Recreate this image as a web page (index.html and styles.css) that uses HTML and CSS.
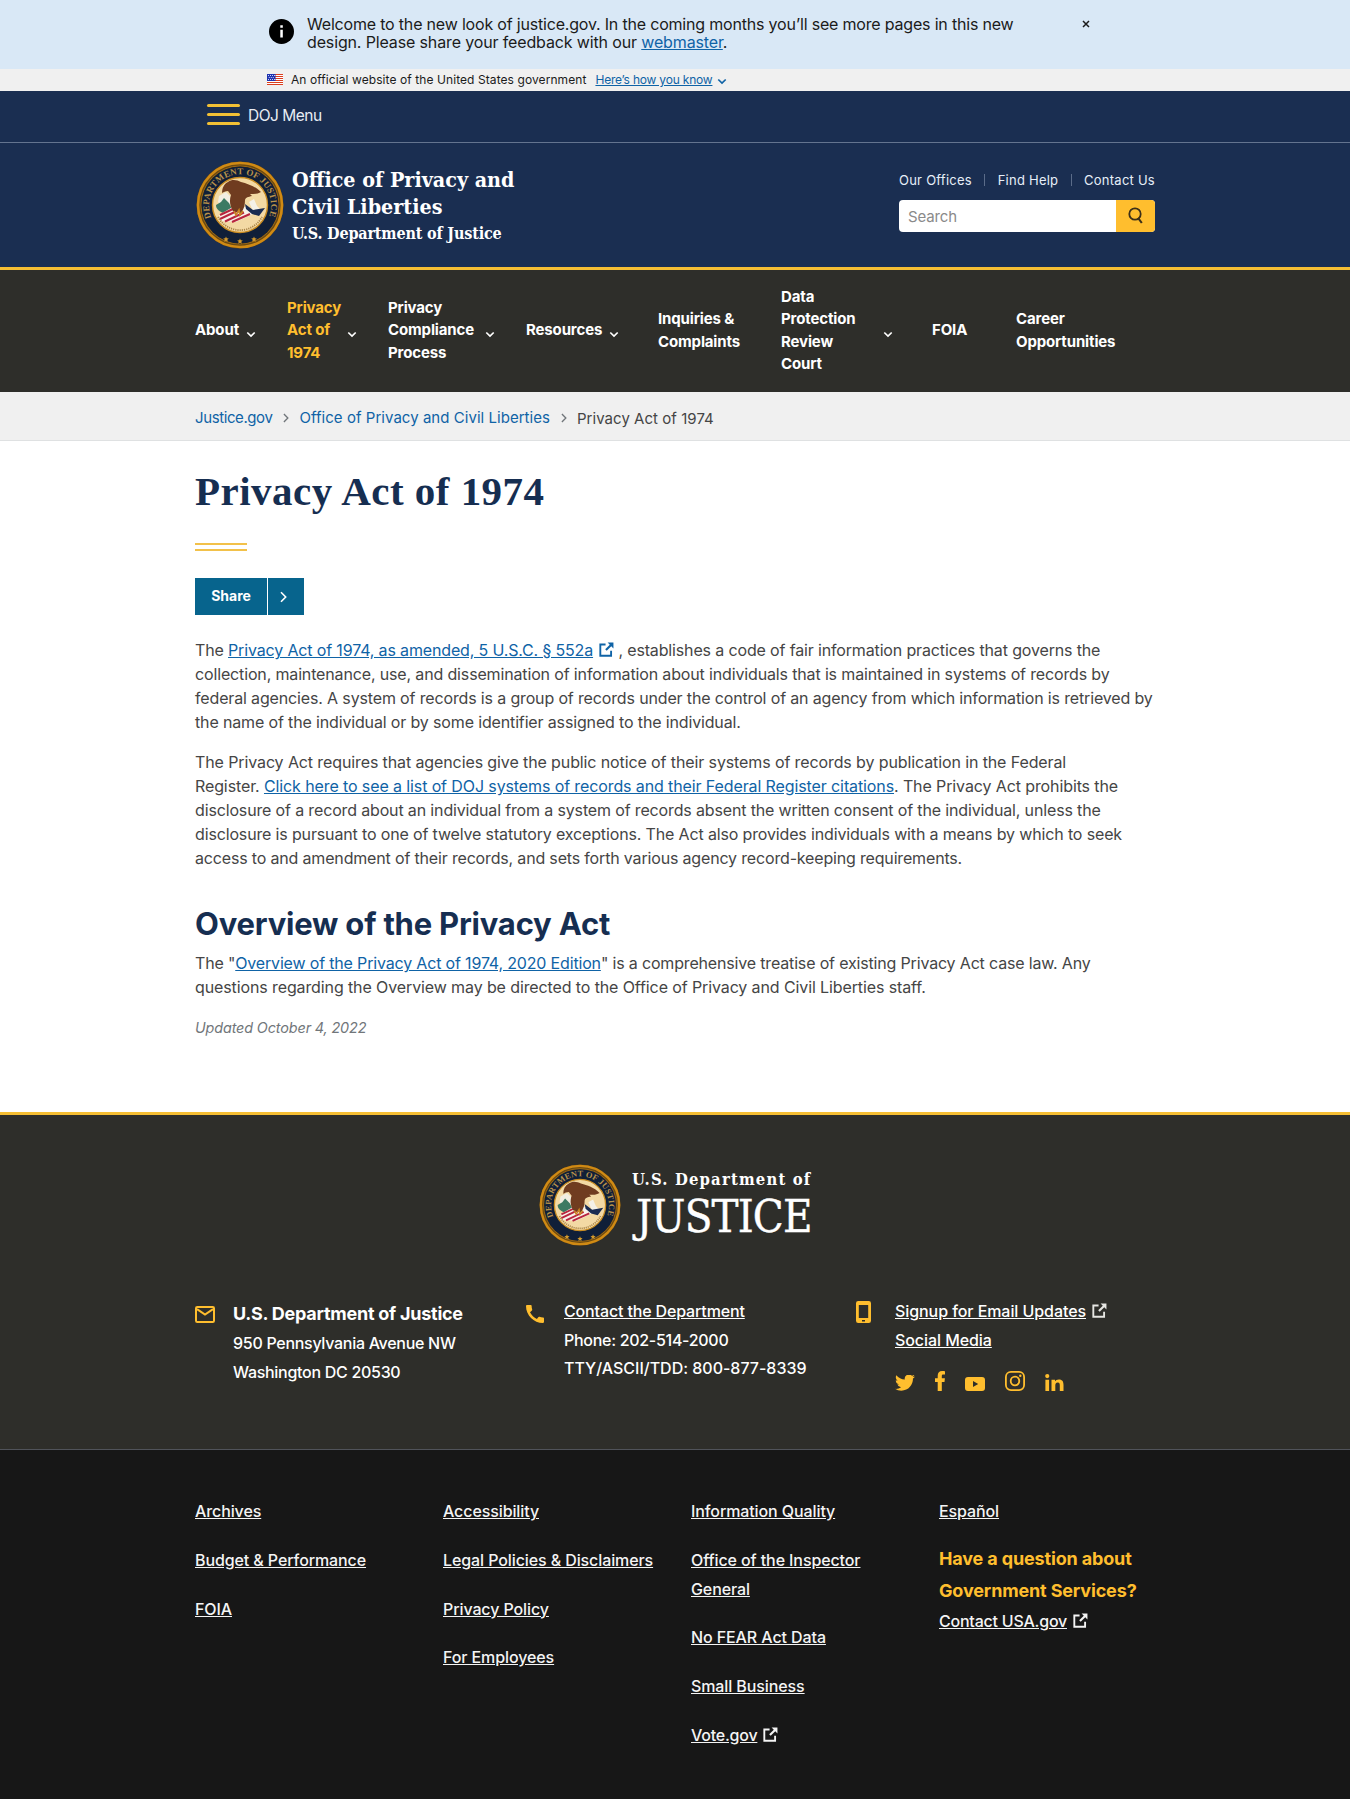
FILE: index.html
```html
<!DOCTYPE html>
<html lang="en">
<head>
<meta charset="utf-8">
<title>Office of Privacy and Civil Liberties | Privacy Act of 1974</title>
<link rel="stylesheet" href="styles.css">
</head>
<body>
<svg class="defs" width="0" height="0" aria-hidden="true">
  <symbol id="ext" viewBox="0 0 16 16"><path d="M7 2.6H1.4v12h11.5V9.4" fill="none" stroke="currentColor" stroke-width="2"/><path d="M9.2 .6H15.4V6.8L13.1 4.5 8.2 9.4 6.6 7.8 11.5 2.9z" fill="currentColor"/></symbol>
  <symbol id="down" viewBox="0 0 10 7"><path d="M1.3 1.5L5 5l3.7-3.5" fill="none" stroke="currentColor" stroke-width="1.7"/></symbol>
  <symbol id="right" viewBox="0 0 7 12"><path d="M1 1.2L5.7 6 1 10.8" fill="none" stroke="currentColor" stroke-width="1.6"/></symbol>
</svg>

<section class="alert">
  <div class="alert-inner">
    <svg class="alert-icon" viewBox="0 0 25 25"><circle cx="12.5" cy="12.5" r="12.5"/><path d="M11.3 6.3h2.5v2.5h-2.5zM11.3 10.7h2.5v7.7h-2.5z" fill="#fff"/></svg>
    <p class="alert-text">Welcome to the new look of justice.gov. In the coming months you’ll see more pages in this new<br><span class="alert-more">design. Please share your feedback with our <a href="#">webmaster</a>.</span></p>
    <button class="close" aria-label="Close"><svg viewBox="0 0 8 8"><path d="M1 1l6 6M7 1L1 7" stroke="#1b1b1b" stroke-width="1.5"/></svg></button>
  </div>
</section>

<section class="banner">
  <div class="banner-inner">
    <svg class="flag" viewBox="0 0 16 11"><path fill="#fff" d="M0 0h16v11H0z"/><path d="M0 .5h16M0 2.5h16M0 4.5h16M0 6.5h16M0 8.5h16M0 10.5h16" stroke="#db3e1f"/><path fill="#1e33b1" d="M0 0h8.5v7H0z"/><path d="M1 1.5h7M1.8 3.5h6M1 5.5h7" stroke="#c8cff5" stroke-dasharray="1 1"/></svg>
    <span class="banner-text">An official website of the United States government</span>
    <a class="banner-link" href="#">Here’s how you know</a>
    <svg class="down banner-down"><use href="#down"/></svg>
  </div>
</section>

<div class="menu-bar">
  <div class="wrap menu-inner"><span class="burger"><i></i><i></i><i></i></span><span class="menu-label">DOJ Menu</span></div>
</div>

<header class="header">
  <div class="wrap header-inner">
    <svg class="header-seal" viewBox="0 0 88 88">
      <g id="seal">
        <circle cx="44" cy="44" r="43.5" fill="#6b4a12"/>
        <circle cx="44" cy="44" r="42" fill="none" stroke="#d08a14" stroke-width="2.6"/>
        <circle cx="44" cy="44" r="39" fill="none" stroke="#a06a14" stroke-width="1"/>
        <circle cx="44" cy="44" r="38.5" fill="#101f38"/>
        <circle cx="44" cy="44" r="27.500" fill="#f3d9a4" stroke="#c98c22" stroke-width="1.4"/>
        <path id="sealArc" d="M15.500 56.500A31 31 0 1 1 72.500 56.500" fill="none"/>
        <text class="seal-text"><textPath href="#sealArc">DEPARTMENT OF JUSTICE</textPath></text>
        <g fill="#d49a2c"><path d="M30 75.500l.8 1.8 2 .1-1.5 1.3.5 2-1.8-1-1.8 1 .5-2-1.5-1.300 2-.1z"/><path d="M44 77.500l.8 1.8 2 .1-1.5 1.3.5 2-1.8-1-1.8 1 .5-2-1.5-1.300 2-.1z"/><path d="M58 75.500l.8 1.8 2 .1-1.5 1.3.5 2-1.8-1-1.8 1 .5-2-1.5-1.300 2-.1z"/></g>
        <path d="M23 35l7-4 4 4 2 8-9 3-5-5z" fill="#f1ede2"/>
        <path d="M20 44l5-3 3-4 5 5 3 6-9 4c-4-2-7-4-7-8z" fill="#3d7a63"/>
        <path d="M53 41l5-3 3 7 6 6-10-1z" fill="#f4f1e8"/>
        <path d="M23 54l17-10 13 3 6 5-19 9-14-1z" fill="#f8f2ea"/>
        <path d="M24 54l13-6M24 58l19-9M29 60.500l19-9M36 61l18-8" stroke="#b8253f" stroke-width="2"/>
        <path d="M49 43l8 6 12-2-6 8-7-2-6-5z" fill="#1a2c52"/>
        <path d="M32 21c4-3 9-2 13 0 7 2 14 4 20 10-3 2-7 2-11 2l2 2c-4 1-6 1-7 4 0 5-1 9-4 13l-8-2c-3-5-4-10-2-16l-3-4c-3 0-4 1-6 2 0-5 2-9 6-11z" fill="#703c20"/>
        <path d="M38 50l2 4 3-5 1 5 3-4" fill="none" stroke="#c88524" stroke-width="1.6"/>
        <path d="M22 56A25 25 0 0 0 66 56" fill="none" stroke="#a98548" stroke-width="1.800" stroke-dasharray="1.200 1"/>
      </g>
    </svg>
    <div class="site-title">Office of Privacy and<br>Civil Liberties<div class="site-sub">U.S. Department of Justice</div></div>
    <div class="header-tools">
      <div class="tool-links"><a>Our Offices</a><i></i><a>Find Help</a><i></i><a>Contact Us</a></div>
      <div class="search"><span class="search-field">Search</span><button class="search-btn" aria-label="Search"><svg viewBox="0 0 16 18"><circle cx="7" cy="7" r="5.7" fill="none" stroke="#3d3018" stroke-width="1.8"/><path d="M10 10.800l3.800 5.200" stroke="#3d3018" stroke-width="2.1"/></svg></button></div>
    </div>
  </div>
</header>

<nav class="nav">
  <div class="wrap nav-inner">
    <a><span class="w-about">About</span><svg class="down"><use href="#down"/></svg></a>
    <a class="active"><span class="w-act">Privacy<br>Act of<br>1974</span><svg class="down"><use href="#down"/></svg></a>
    <a><span class="w-comp">Privacy<br>Compliance<br>Process</span><svg class="down"><use href="#down"/></svg></a>
    <a><span class="w-res">Resources</span><svg class="down"><use href="#down"/></svg></a>
    <a><span>Inquiries &amp;<br>Complaints</span></a>
    <a><span class="w-data">Data<br>Protection<br>Review<br>Court</span><svg class="down"><use href="#down"/></svg></a>
    <a><span>FOIA</span></a>
    <a><span>Career<br>Opportunities</span></a>
  </div>
</nav>

<div class="crumbs">
  <div class="wrap crumbs-inner">
    <a class="crumb-home" href="#">Justice.gov</a><svg class="right"><use href="#right"/></svg><a href="#">Office of Privacy and Civil Liberties</a><svg class="right"><use href="#right"/></svg><span class="crumb-here">Privacy Act of 1974</span>
  </div>
</div>

<main class="wrap main">
  <h1>Privacy Act of 1974</h1>
  <div class="rule"></div>
  <button class="share"><span>Share</span><span class="share-more"><svg class="right"><use href="#right"/></svg></span></button>
  <p class="lead">The <a href="#">Privacy Act of 1974, as amended, 5 U.S.C. § 552a</a><svg class="ext"><use href="#ext"/></svg> , establishes a code of fair information practices that governs the<br>collection, maintenance, use, and dissemination of information about individuals that is maintained in systems of records by<br>federal agencies. A system of records is a group of records under the control of an agency from which information is retrieved by<br>the name of the individual or by some identifier assigned to the individual.</p>
  <p><span class="looser">The Privacy Act requires that agencies give the public notice of their systems of records by publication in the Federal<br>Register. <a href="#">Click here to see a list of DOJ systems of records and their Federal Register citations</a>. The Privacy Act prohibits the</span><br>disclosure of a record about an individual from a system of records absent the written consent of the individual, unless the<br>disclosure is pursuant to one of twelve statutory exceptions. The Act also provides individuals with a means by which to seek<br><span class="tighter">access to and amendment of their records, and sets forth various agency record-keeping requirements.</span></p>
  <h2>Overview of the Privacy Act</h2>
  <p class="overview"><span class="tighter">The "<a href="#">Overview of the Privacy Act of 1974, 2020 Edition</a>" is a comprehensive treatise of existing Privacy Act case law. Any</span><br>questions regarding the Overview may be directed to the Office of Privacy and Civil Liberties staff.</p>
  <p class="updated">Updated October 4, 2022</p>
</main>

<footer>
  <section class="foot">
    <div class="wrap">
      <div class="foot-logo">
        <svg class="foot-seal" viewBox="0 0 88 88"><use href="#seal"/></svg>
        <div class="foot-name"><div class="foot-dept">U.S. Department of</div><div class="foot-justice">JUSTICE</div></div>
      </div>
      <div class="foot-cols">
        <div class="contact">
          <svg class="mail" viewBox="0 0 20 17"><rect x="1" y="1" width="18" height="15" rx="1.2" fill="none" stroke="#ffbe2e" stroke-width="2"/><path d="M2 3.2l8 5.3 8-5.3" fill="none" stroke="#ffbe2e" stroke-width="2"/></svg>
          <div><div class="foot-head">U.S. Department of Justice</div><div class="addr">950 Pennsylvania Avenue NW</div><div class="addr">Washington DC 20530</div></div>
        </div>
        <div class="contact">
          <svg class="phone" viewBox="3 3 18 18"><path fill="#ffbe2e" d="M20.01 15.38c-1.23 0-2.42-.2-3.53-.56a.977.977 0 0 0-1.01.24l-1.57 1.97c-2.83-1.35-5.48-3.9-6.89-6.83l1.95-1.66c.27-.28.35-.67.24-1.02-.37-1.11-.56-2.3-.56-3.53 0-.54-.45-.99-.99-.99H4.190C3.650 3 3 3.240 3 3.990 3 13.280 10.730 21 20.010 21c.71 0 .99-.63.99-1.180v-3.450c0-.54-.45-.99-.99-.99z"/></svg>
          <div><a href="#">Contact the Department</a><div class="addr">Phone: 202-514-2000</div><div class="tty">TTY/ASCII/TDD: 800-877-8339</div></div>
        </div>
        <div class="contact">
          <svg class="mobile" viewBox="0 0 15 22"><path fill="#ffbe2e" fill-rule="evenodd" d="M2.2 0h10.6A2.2 2.2 0 0 1 15 2.2v17.6a2.2 2.2 0 0 1-2.2 2.2H2.2A2.2 2.2 0 0 1 0 19.800V2.200A2.200 2.200 0 0 1 2.200 0zM2.800 4v13h9.400V4zM6 19v1.400h3V19z"/></svg>
          <div class="signup"><a href="#">Signup for Email Updates</a><svg class="ext"><use href="#ext"/></svg><br><a href="#">Social Media</a>
            <div class="social">
              <svg class="tw" viewBox="0 3 24 19"><path d="M23.950 4.570a10 10 0 0 1-2.820.770 4.960 4.960 0 0 0 2.160-2.720c-.950.550-2 .950-3.130 1.180a4.920 4.920 0 0 0-8.380 4.480C7.690 8.090 4.070 6.130 1.640 3.160a4.820 4.820 0 0 0-.670 2.480c0 1.710.870 3.210 2.190 4.100a4.900 4.900 0 0 1-2.230-.620v.060a4.920 4.920 0 0 0 3.950 4.830 5 5 0 0 1-2.210.080 4.940 4.940 0 0 0 4.600 3.420A9.870 9.870 0 0 1 0 19.540a13.990 13.990 0 0 0 7.550 2.210c9.050 0 14-7.500 14-13.980 0-.210 0-.420-.020-.630a9.940 9.940 0 0 0 2.420-2.570z"/></svg>
              <svg class="fb" viewBox="0 0 10 20"><path d="M2.700 20V11H0V7.300h2.700V4.800C2.700 1.700 4.300 0 7.100 0c1.300 0 2.400.1 2.900.2v3.300H8.300C7 3.500 6.800 4.100 6.800 5v2.300h3.100L9.500 11H6.800v9z"/></svg>
              <svg class="yt" viewBox="0 0 20 14"><path fill-rule="evenodd" d="M3 0h14q3 0 3 3v8q0 3-3 3H3q-3 0-3-3V3q0-3 3-3zm5 4v6l5.200-3z"/></svg>
              <svg class="ig" viewBox="0 0 20 20"><g fill="none" stroke="#ffbe2e" stroke-width="1.800"><rect x=".9" y=".9" width="18.200" height="18.200" rx="5"/><circle cx="10" cy="10" r="4.300"/></g><circle cx="15.300" cy="4.700" r="1.200"/></svg>
              <svg class="li" viewBox="0 0 19 17"><path d="M.4 5.700h3.700V17H.4zM6.500 5.700H10v1.600c.6-1.100 1.900-1.900 3.800-1.900 3.900 0 4.700 2.400 4.700 5.700V17h-3.700v-5.300c0-1.500-.1-3.100-2-3.100-2.100 0-2.500 1.500-2.500 3V17H6.500z"/><circle cx="2.250" cy="2.100" r="2.100"/></svg>
            </div>
          </div>
        </div>
      </div>
    </div>
  </section>
  <section class="bottom">
    <div class="wrap bottom-cols">
      <ul><li><a href="#">Archives</a></li><li><a href="#">Budget &amp; Performance</a></li><li><a href="#">FOIA</a></li></ul>
      <ul><li><a href="#">Accessibility</a></li><li><a href="#">Legal Policies &amp; Disclaimers</a></li><li><a href="#">Privacy Policy</a></li><li><a href="#">For Employees</a></li></ul>
      <ul><li><a href="#">Information Quality</a></li><li><a href="#">Office of the Inspector<br>General</a></li><li><a href="#">No FEAR Act Data</a></li><li><a href="#">Small Business</a></li><li class="site-link"><a href="#">Vote.gov</a><svg class="ext"><use href="#ext"/></svg></li></ul>
      <div><a href="#">Español</a><div class="question">Have a question about<br>Government Services?</div><div class="site-link"><a href="#">Contact USA.gov</a><svg class="ext"><use href="#ext"/></svg></div></div>
    </div>
  </section>
</footer>
</body>
</html>
```
FILE: styles.css
```css
* { box-sizing: border-box; }
body { margin: 0; background: #fff; color: #454545; font: 400 16px/24px Inter, "Liberation Sans", sans-serif; letter-spacing: -.148px; white-space: nowrap; }
p, h1, h2, ul { margin: 0; padding: 0; }
button { border: 0; padding: 0; margin: 0; background: none; font: inherit; }
svg { display: block; flex: none; }
a { color: #0f63a6; }
.defs { position: absolute; }
.wrap { width: 960px; margin: 0 auto; }
.down { width: 10px; height: 7px; }
.right { width: 7px; height: 12px; }
.ext { display: inline-block; width: 15px; height: 15px; margin-left: 6px; vertical-align: -1px; }
.seal-text { font: 700 9px "Liberation Serif", serif; fill: #b9924a; letter-spacing: .15px; }

.alert { height: 69px; background: #d9e8f6; color: #1b1b1b; }
.alert-inner { display: flex; width: 826px; margin-left: 269px; padding-top: 15px; }
.alert-icon { width: 25px; height: 25px; margin: 4px 13px 0 0; }
.alert-text { line-height: 18px; letter-spacing: -.190px; }
.alert-more { letter-spacing: -.140px; }
.close { margin: 5px 5px 0 auto; height: 8px; }
.close svg { width: 8px; height: 8px; }

.banner { height: 22px; background: #f0f0f0; color: #1b1b1b; font-size: 12px; line-height: 21px; }
.banner-inner { display: flex; align-items: center; margin-left: 267px; }
.flag { width: 16px; height: 11px; margin-right: 8px; }
.banner-text { letter-spacing: .08px; }
.banner-link { margin-left: 9px; letter-spacing: -.199px; }
.banner-down { margin: 3px 0 0 5px; color: #0f63a6; }

.menu-bar { height: 52px; background: #1a2e51; border-bottom: 1px solid #64748f; color: #e8edf4; }
.menu-inner { display: flex; align-items: center; height: 46px; padding-left: 12px; }
.burger { display: flex; flex-direction: column; gap: 6px; width: 33px; margin-right: 8px; }
.burger i { height: 3px; border-radius: 2px; background: #f2c035; }
.menu-label { padding-top: 3px; font-size: 15.500px; letter-spacing: -.5px; }

.header { height: 127px; background: #1a2e51; border-bottom: 3px solid #f5be33; }
.header-inner { display: flex; align-items: flex-start; }
.header-seal { width: 88px; height: 88px; margin: 18px 8px 0 1px; }
.site-title { margin-top: 23px; color: #fff; font: 700 21.300px/27px "DejaVu Serif Condensed", "DejaVu Serif", serif; font-stretch: condensed; letter-spacing: 0; }
.site-sub { font-size: 16px; letter-spacing: -.170px; }
.header-tools { width: 256px; margin: 29px 0 0 auto; }
.tool-links { display: flex; justify-content: space-between; align-items: center; color: #e6eef8; font-size: 13px; line-height: 16px; letter-spacing: .240px; }
.tool-links a { color: inherit; }
.tool-links i { width: 1px; height: 12px; background: #5b6c89; }
.search { display: flex; height: 32px; margin-top: 12px; border-radius: 4px; overflow: hidden; background: #fff; }
.search-field { flex: 1; padding-left: 9px; color: #8a8a8a; font-size: 15px; line-height: 33px; }
.search-btn { display: grid; place-items: center; width: 39px; background: #ffbe2e; }
.search-btn svg { width: 16px; height: 18px; }

.nav { height: 122px; background: #2e2e2a; color: #fff; }
.nav-inner { display: grid; grid-template-columns: 92px 101px 138px 132px 123px 151px 84px 139px; align-items: center; height: 121px; font-weight: 700; font-size: 15px; line-height: 22.500px; letter-spacing: -.14px; }
.nav a { display: flex; align-items: center; color: inherit; }
.nav .active { color: #ffbe2e; }
.nav .down { margin-top: 7px; color: #fff; }
.w-about { width: 51px; }
.w-act { width: 60px; }
.w-comp { width: 97px; }
.w-res { width: 83px; }
.w-data { width: 102px; }

.crumbs { height: 49px; background: #f0f0f0; border-bottom: 1px solid #dfe1e2; font-size: 15px; letter-spacing: .04px; }
.crumbs-inner { display: flex; align-items: center; height: 48px; padding-top: 3px; }
.crumbs a { text-decoration: none; }
.crumbs svg { width: 6px; height: 10px; margin: 0 10px 0 11px; color: #71767a; }
.crumb-home { letter-spacing: -.4px; }
.crumb-here { padding-top: 2px; }

.main { height: 671px; padding-top: 25px; }
h1 { color: #162e51; font: 700 41px/50px "Liberation Serif", serif; letter-spacing: .480px; }
.rule { width: 52px; height: 8px; margin-top: 27px; border: solid #f2c14a; border-width: 2px 0; }
.share { display: flex; align-items: stretch; width: 109px; height: 37px; margin-top: 27px; background: #07648d; color: #fff; font-weight: 700; font-size: 14px; line-height: 36px; letter-spacing: 0; }
.share > span:first-child { width: 72px; text-align: center; }
.share-more { display: flex; align-items: center; padding-left: 12px; border-left: 1px solid #fff; }
.main p { margin-top: 16px; }
.main .lead { margin-top: 23px; }
.looser { letter-spacing: -.110px; }
.tighter { letter-spacing: -.168px; }
h2 { margin-top: 34px; color: #162e51; font-weight: 700; font-size: 31px; line-height: 40px; letter-spacing: -.21px; }
.main .overview { margin-top: 7px; letter-spacing: -.111px; }
.lead .ext { color: #0f63a6; }
.main .updated { margin-top: 17px; color: #71767a; font-style: italic; font-size: 14.400px; letter-spacing: -.13px; }

.foot { height: 338px; padding-top: 49px; background: #2e2e2a; border-top: 3px solid #f5be33; border-bottom: 1px solid #50535a; color: #fff; font-weight: 500; line-height: 29px; }
.foot a, .bottom a { color: inherit; }
.foot-logo { display: flex; gap: 11px; padding-left: 344px; height: 133px; }
.foot-seal { width: 82px; height: 82px; }
.foot-name { padding-top: 4px; font-family: "DejaVu Serif Condensed", "DejaVu Serif", serif; font-stretch: condensed; }
.foot-dept { font-weight: 700; font-size: 16.500px; line-height: 24px; letter-spacing: 1.170px; }
.foot-justice { padding-left: 4px; font-weight: 400; font-size: 45px; line-height: 49px; letter-spacing: -.850px; -webkit-text-stroke: .4px #fff; }
.foot-cols { display: grid; grid-template-columns: 331px 330px 1fr; }
.contact { display: flex; align-items: flex-start; }
.foot-head { padding-top: 1px; font-weight: 700; font-size: 18px; line-height: 31px; letter-spacing: -.250px; }
.addr { letter-spacing: -.290px; }
.tty { line-height: 27px; letter-spacing: -.012px; }
.signup { letter-spacing: -.072px; }
.mail { width: 20px; height: 17px; margin: 9px 18px 0 0; }
.phone { width: 18px; height: 18px; margin: 8px 20px 0 0; }
.mobile { width: 15px; height: 22px; margin: 4px 24px 0 0; }
.contact .ext { color: #e6e6e2; }
.social { display: flex; align-items: flex-end; height: 20px; margin-top: 16px; }
.social svg { fill: #ffbe2e; }
.tw { width: 20px; height: 16px; margin-right: 20px; }
.fb { width: 10px; height: 20px; margin-right: 20px; }
.yt { width: 20px; height: 14px; margin-right: 20px; }
.ig { width: 20px; height: 20px; margin-right: 20px; }
.li { width: 19px; height: 17px; }

.bottom { height: 349px; padding-top: 47px; background: #171717; color: #f4f4f4; font-weight: 500; line-height: 28.800px; letter-spacing: -.1px; }
.bottom-cols { display: grid; grid-template-columns: repeat(3, 248px) 1fr; }
.bottom ul { list-style: none; }
.bottom li { margin-bottom: 20px; }
.site-link { letter-spacing: -.223px; }
.question { margin-top: 17px; color: #ffbe2e; font-weight: 700; font-size: 18px; line-height: 32px; letter-spacing: -.15px; }
```
